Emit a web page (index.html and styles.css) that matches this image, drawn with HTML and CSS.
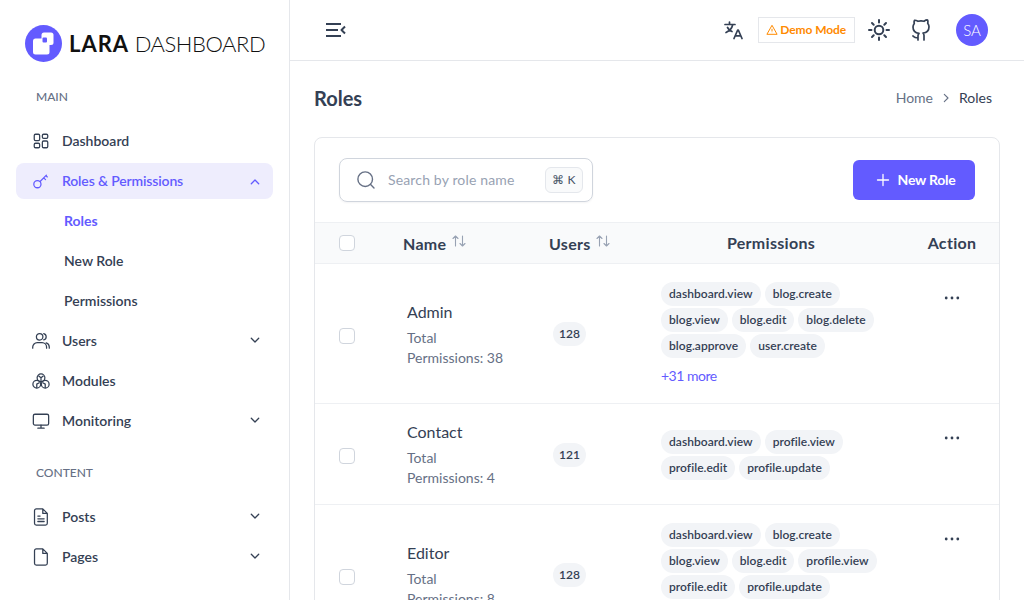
FILE: index.html
```html
<!DOCTYPE html>
<html>
<head>
  <title>Roles - Lara Dashboard</title>
  <link rel="stylesheet" href="styles.css">
</head>
<body>
  <svg class="defs" width="0" height="0">
    <symbol id="chev-down" viewBox="0 0 12 12"><path d="M2.300 3.300L6 7l3.700-3.700" fill="none" stroke="currentColor" stroke-width="1.300" stroke-linecap="round" stroke-linejoin="round"/></symbol>
    <symbol id="chev-up" viewBox="0 0 12 12"><path d="M2.300 8.700L6 5l3.700 3.700" fill="none" stroke="currentColor" stroke-width="1.300" stroke-linecap="round" stroke-linejoin="round"/></symbol>
    <symbol id="chev-right" viewBox="0 0 12 12"><path d="M4.300 2.300L8 6 4.300 9.700" fill="none" stroke="currentColor" stroke-width="1.100" stroke-linecap="round" stroke-linejoin="round"/></symbol>
    <symbol id="sort" viewBox="0 0 16 16"><path d="M4.500 13V3M2 5.500L4.500 3 7 5.500M11.500 3v10M9 10.500l2.500 2.500 2.500-2.500" fill="none" stroke="currentColor" stroke-width="1.100" stroke-linecap="round" stroke-linejoin="round"/></symbol>
    <symbol id="dots" viewBox="0 0 16 4"><circle cx="2.200" cy="2" r="1.400"/><circle cx="8" cy="2" r="1.400"/><circle cx="13.800" cy="2" r="1.400"/></symbol>
  </svg>

  <aside id="sidebar">
    <div class="logo">
      <svg class="logo-mark" width="37" height="37" viewBox="0 0 37 37">
        <circle cx="18.500" cy="18.500" r="18.500" fill="#635bff"/>
        <rect x="8" y="13.500" width="16.500" height="16" rx="2.500" fill="#fff"/>
        <rect x="16.500" y="7.500" width="12" height="12.500" rx="2.500" fill="#fff"/>
        <rect x="17.500" y="12.500" width="4.500" height="5" rx="1" fill="#635bff"/>
      </svg>
      <span class="logo-text"><b>LARA</b> DASHBOARD</span>
    </div>

    <div class="nav-label">Main</div>
    <nav class="nav">
      <a class="nav-item">
        <svg class="nav-icon" viewBox="0 0 20 20"><rect x="2.500" y="2.500" width="6" height="7" rx="1.400"/><rect x="11.500" y="2.500" width="6" height="4.500" rx="1.400"/><rect x="2.500" y="12.500" width="6" height="5" rx="1.400"/><rect x="11.500" y="10" width="6" height="7.500" rx="1.400"/></svg>
        Dashboard
      </a>
      <a class="nav-item active">
        <svg class="nav-icon" viewBox="0 0 20 20"><circle cx="6" cy="13.500" r="4"/><path d="M9 10.500l7-7M13 6.500l2 2M15.500 4l1.500 1.500"/></svg>
        Roles &amp; Permissions
        <svg class="chev"><use href="#chev-up"/></svg>
      </a>
      <a class="sub-item current">Roles</a>
      <a class="sub-item">New Role</a>
      <a class="sub-item">Permissions</a>
      <a class="nav-item">
        <svg class="nav-icon" viewBox="0 0 20 20"><circle cx="8.500" cy="5.300" r="3.600"/><path d="M.8 18v-1.200a5 5 0 0 1 5-5h5.400a5 5 0 0 1 5 5V18M13 1.800a3.600 3.600 0 0 1 0 7M15.800 12a5 5 0 0 1 3.400 4.700V18"/></svg>
        Users
        <svg class="chev"><use href="#chev-down"/></svg>
      </a>
      <a class="nav-item">
        <svg class="nav-icon" viewBox="0 0 20 20"><circle cx="10" cy="6.500" r="4.300"/><circle cx="5.300" cy="13.500" r="4.300"/><circle cx="14.700" cy="13.500" r="4.300"/><path d="M10 6.500v3M7.500 4.500l2.500 2 2.500-2M5.300 13.500l2.700-1.500M5.300 13.500v3.800M14.700 13.500L12 12M14.700 13.500v3.800"/></svg>
        Modules
      </a>
      <a class="nav-item">
        <svg class="nav-icon" viewBox="0 0 20 20"><rect x="1.500" y="2.500" width="17" height="12" rx="1.800"/><path d="M10 14.500v3M6.500 18h7"/></svg>
        Monitoring
        <svg class="chev"><use href="#chev-down"/></svg>
      </a>
    </nav>

    <div class="nav-label second">Content</div>
    <nav class="nav">
      <a class="nav-item">
        <svg class="nav-icon" viewBox="0 0 20 20"><path d="M2.800 3a2 2 0 0 1 2-2h7.200l5 5v11a2 2 0 0 1-2 2H4.800a2 2 0 0 1-2-2zM12 1v5h5M6.500 9h2.500M6.500 12h7M6.500 15h7"/></svg>
        Posts
        <svg class="chev"><use href="#chev-down"/></svg>
      </a>
      <a class="nav-item">
        <svg class="nav-icon" viewBox="0 0 20 20"><path d="M2.800 3a2 2 0 0 1 2-2h7.200l5 5v11a2 2 0 0 1-2 2H4.800a2 2 0 0 1-2-2zM12 1v5h5"/></svg>
        Pages
        <svg class="chev"><use href="#chev-down"/></svg>
      </a>
    </nav>
  </aside>

  <div id="main">
    <header class="topbar">
      <svg class="menu-btn" width="20" height="14" viewBox="0 0 20 14"><path d="M0 1h15M0 7h12M0 13h15M19 3.500L15.500 7l3.500 3.500"/></svg>
      <div class="top-actions">
        <svg class="top-icon lang" width="20" height="20" viewBox="0 0 20 20"><path d="M1 4.500h10M5.500 2v2.500M8.800 4.500C8 8 5.500 11 2 12.500M3.500 7.500c1 2 2.500 3.300 4.500 4M10 18.500l3.700-8.500h.6L18 18.500M11.300 15.800h5.400"/></svg>
        <span class="demo">
          <svg width="12" height="12" viewBox="0 0 12 12"><path d="M6 1.300L.9 10.300h10.200zM6 4.800v2.700M6 8.800v.2"/></svg>
          Demo Mode
        </span>
        <svg class="top-icon sun" width="24" height="24" viewBox="0 0 24 24"><circle cx="12" cy="12" r="4.300"/><path d="M12 2v2.500M12 19.500V22M2 12h2.500M19.500 12H22M5 5l1.700 1.700M17.300 17.300L19 19M5 19l1.700-1.700M17.300 6.700L19 5"/></svg>
        <svg class="top-icon git" width="20" height="22" viewBox="0 0 20 22"><path d="M13 21v-4c.1-1.200-.3-2.300-1-3 3-.3 6-1.500 6-6.300 0-1.300-.5-2.500-1.300-3.500.3-1.100.3-2.300-.2-3.200 0 0-1.100-.3-3.500 1.300a12 12 0 0 0-6 0C4.600 1 3.500 1.300 3.500 1.300c-.5.900-.5 2.100-.2 3.200C2.500 5.500 2 6.700 2 8c0 4.800 3 6 6 6.300-.7.700-1.100 1.800-1 3V21M7 18.500c-3 1-4-1-5-1.500"/></svg>
        <span class="avatar">SA</span>
      </div>
    </header>

    <div class="content">
      <div class="page-head">
        <h1>Roles</h1>
        <div class="crumbs">
          <span class="crumb-home">Home</span>
          <svg class="crumb-sep"><use href="#chev-right"/></svg>
          <span>Roles</span>
        </div>
      </div>

      <div class="card">
        <div class="toolbar">
          <div class="search">
            <svg class="search-icon" width="20" height="20" viewBox="0 0 20 20"><circle cx="9.200" cy="9.200" r="7.300"/><path d="M14.600 14.600L18 18"/></svg>
            <span class="search-text">Search by role name</span>
            <span class="kbd">⌘ K</span>
          </div>
          <button class="new-btn">
            <svg width="14" height="14" viewBox="0 0 14 14"><path d="M7 1.500v11M1.500 7h11"/></svg>
            New Role
          </button>
        </div>

        <table class="roles">
          <colgroup>
            <col class="c-check"><col class="c-name"><col class="c-users"><col class="c-perm"><col class="c-action">
          </colgroup>
          <thead>
            <tr>
              <th class="check-cell"><span class="check"></span></th>
              <th>Name <svg class="sort"><use href="#sort"/></svg></th>
              <th>Users <svg class="sort"><use href="#sort"/></svg></th>
              <th class="center">Permissions</th>
              <th class="center">Action</th>
            </tr>
          </thead>
          <tbody>
            <tr>
              <td class="check-cell"><span class="check"></span></td>
              <td class="name-cell"><div class="role-name">Admin</div><div class="role-sub">Total Permissions: 38</div></td>
              <td class="users-cell"><span class="chip">128</span></td>
              <td class="perm-cell">
                <div class="chips">
                  <span class="chip">dashboard.view</span><span class="chip">blog.create</span><span class="chip">blog.view</span><span class="chip">blog.edit</span><span class="chip">blog.delete</span><span class="chip">blog.approve</span><span class="chip">user.create</span>
                </div>
                <div class="more">+31 more</div>
              </td>
              <td class="action-cell"><svg class="dots"><use href="#dots"/></svg></td>
            </tr>
            <tr>
              <td class="check-cell"><span class="check"></span></td>
              <td class="name-cell"><div class="role-name">Contact</div><div class="role-sub">Total Permissions: 4</div></td>
              <td class="users-cell"><span class="chip">121</span></td>
              <td class="perm-cell">
                <div class="chips">
                  <span class="chip">dashboard.view</span><span class="chip">profile.view</span><span class="chip">profile.edit</span><span class="chip">profile.update</span>
                </div>
              </td>
              <td class="action-cell"><svg class="dots"><use href="#dots"/></svg></td>
            </tr>
            <tr>
              <td class="check-cell"><span class="check"></span></td>
              <td class="name-cell"><div class="role-name">Editor</div><div class="role-sub">Total Permissions: 8</div></td>
              <td class="users-cell"><span class="chip">128</span></td>
              <td class="perm-cell">
                <div class="chips">
                  <span class="chip">dashboard.view</span><span class="chip">blog.create</span><span class="chip">blog.view</span><span class="chip">blog.edit</span><span class="chip">profile.view</span><span class="chip">profile.edit</span><span class="chip">profile.update</span>
                </div>
                <div class="more">+1 more</div>
              </td>
              <td class="action-cell"><svg class="dots"><use href="#dots"/></svg></td>
            </tr>
          </tbody>
        </table>
      </div>
    </div>
  </div>
</body>
</html>
```

FILE: styles.css
```css
* {
  box-sizing: border-box;
}

body {
  margin: 0;
  height: 100vh;
  overflow: hidden;
  display: flex;
  background-color: #fff;
  color: #344054;
  font-family: Lato, "Open Sans", sans-serif;
  font-size: 14px;
  line-height: 20px;
}

.defs {
  position: absolute;
}

/* sidebar */
#sidebar {
  flex: 0 0 290px;
  height: 100%;
  padding: 0 16px;
  border-right: 1px solid #e5e7eb;
  overflow: hidden;
}

.logo {
  height: 87px;
  display: flex;
  align-items: center;
  padding: 0 0 0 9px;
  gap: 7px;
}

.logo-mark {
  flex: none;
}

.logo-text {
  font-size: 22px;
  font-weight: 300;
  color: #111;
  white-space: nowrap;
  letter-spacing: -0.45px;
}

.logo-text b {
  font-weight: 700;
  letter-spacing: 1px;
}

.nav-label {
  padding-left: 20px;
  font-size: 12px;
  font-weight: 500;
  color: #667085;
  text-transform: uppercase;
  margin-bottom: 16px;
}

.nav-label.second {
  margin-top: 24px;
}

.nav {
  display: flex;
  flex-direction: column;
  gap: 4px;
}

.nav-item,
.sub-item {
  height: 36px;
  display: flex;
  align-items: center;
  font-weight: 600;
  border-radius: 8px;
}

.nav-item {
  padding: 0 12px 0 16px;
}

.nav-item.active {
  background-color: #eeedfd;
  color: #635bff;
  letter-spacing: -0.15px;
}

.sub-item {
  padding-left: 48px;
}

.sub-item.current {
  color: #635bff;
  font-weight: 700;
}

.nav-icon {
  width: 18px;
  height: 18px;
  margin-right: 12px;
  fill: none;
  stroke: currentColor;
  stroke-width: 1.400;
  stroke-linecap: round;
  stroke-linejoin: round;
  flex: none;
}

.chev {
  width: 12px;
  height: 12px;
  margin-left: auto;
}

/* top bar */
#main {
  flex: 1;
  min-width: 0;
}

.topbar {
  height: 61px;
  display: flex;
  align-items: center;
  justify-content: space-between;
  padding: 0 36px;
  border-bottom: 1px solid #e5e7eb;
}

.menu-btn,
.top-icon,
.search-icon {
  fill: none;
  stroke: #344054;
  stroke-width: 1.700;
  stroke-linecap: round;
  stroke-linejoin: round;
}

.menu-btn {
  stroke-width: 2;
  stroke-linecap: butt;
}

.top-actions {
  display: flex;
  align-items: center;
}

.lang {
  margin-right: 14px;
}

.demo {
  height: 26px;
  padding: 0 8px 0 7px;
  display: flex;
  align-items: center;
  gap: 2px;
  border: 1px solid #e5e7eb;
  font-size: 12px;
  font-weight: 700;
  letter-spacing: -0.1px;
  color: #ff8a00;
}

.demo svg {
  fill: none;
  stroke: #ff8a00;
  stroke-width: 1;
  stroke-linejoin: round;
}

.sun {
  margin: 0 20px 0 12px;
  stroke-width: 2;
}

.git {
  margin-right: 25px;
}

.avatar {
  width: 32px;
  height: 32px;
  border-radius: 50%;
  background-color: #635bff;
  color: #fff;
  font-size: 15px;
  font-weight: 300;
  display: flex;
  align-items: center;
  justify-content: center;
}

/* page */
.content {
  padding: 24px 24px 0;
}

.page-head {
  display: flex;
  align-items: center;
  justify-content: space-between;
  height: 26px;
  margin-bottom: 26px;
}

h1 {
  margin: 0;
  font-size: 20px;
  font-weight: 700;
}

.crumbs {
  display: flex;
  align-items: center;
  gap: 7px;
  padding-right: 8px;
}

.crumb-home {
  color: #667085;
}

.crumb-sep {
  width: 12px;
  height: 12px;
  color: #667085;
}

.card {
  border: 1px solid #e5e7eb;
  border-radius: 8px 8px 0 0;
}

.toolbar {
  height: 84px;
  display: flex;
  align-items: center;
  justify-content: space-between;
  padding: 0 24px;
}

.search {
  width: 254px;
  height: 44px;
  display: flex;
  align-items: center;
  padding: 0 9px 0 16px;
  border: 1px solid #d0d5dd;
  border-radius: 8px;
  box-shadow: 0 1px 2px rgba(16, 24, 40, 0.05);
}

.search-icon {
  flex: none;
  stroke: #667085;
  stroke-width: 1.400;
}

.search-text {
  margin-left: 12px;
  color: #98a2b3;
  letter-spacing: 0.15px;
}

.kbd {
  margin-left: auto;
  width: 38px;
  height: 26px;
  display: flex;
  align-items: center;
  justify-content: center;
  background-color: #f9fafb;
  border: 1px solid #e4e7ec;
  border-radius: 6px;
  font-size: 12px;
  color: #475467;
}

.new-btn {
  width: 122px;
  height: 40px;
  display: flex;
  align-items: center;
  justify-content: center;
  gap: 8px;
  padding: 0 0 0 3px;
  border: none;
  border-radius: 6px;
  background-color: #635bff;
  color: #fff;
  font: inherit;
  font-weight: 700;
  letter-spacing: -0.25px;
  cursor: pointer;
}

.new-btn svg {
  fill: none;
  stroke: #fff;
  stroke-width: 1.300;
  stroke-linecap: round;
}

/* table */
.roles {
  width: 684px;
  table-layout: fixed;
  border-collapse: collapse;
}

.c-check { width: 68px; }
.c-name { width: 146px; }
.c-users { width: 108px; }
.c-perm { width: 268px; }
.c-action { width: 94px; }

.roles th {
  height: 41px;
  padding: 0 0 0 20px;
  background-color: #f9fafb;
  border-top: 1px solid #eef0f3;
  border-bottom: 1px solid #eef0f3;
  font-size: 16px;
  font-weight: 700;
  letter-spacing: 0.3px;
  text-align: left;
  white-space: nowrap;
}

.roles th.center {
  padding: 0;
  text-align: center;
}

.roles th.check-cell {
  padding: 0 0 0 24px;
}

.roles td.check-cell {
  padding: 4px 0 0 24px;
}

.roles td {
  padding: 18px 0 17px 24px;
  border-bottom: 1px solid #eef0f3;
  vertical-align: middle;
}

.check {
  display: block;
  width: 16px;
  height: 16px;
  border: 1px solid #d0d5dd;
  border-radius: 4px;
  background-color: #fff;
}

.sort {
  width: 16px;
  height: 16px;
  color: #98a2b3;
  vertical-align: 1px;
}

.roles td.name-cell {
  padding: 18px 0 16px 24px;
}

.role-name {
  font-size: 16px;
  margin-bottom: 6px;
}

.role-sub {
  max-width: 100px;
  color: #667085;
}

.chips {
  display: flex;
  flex-wrap: wrap;
  gap: 2px 4px;
}

.chip {
  display: inline-block;
  height: 24px;
  padding: 0 8px;
  border-radius: 12px;
  background-color: #f2f4f7;
  font-size: 12px;
  font-weight: 600;
  letter-spacing: 0.05px;
  line-height: 24px;
}

.users-cell .chip {
  padding: 0 6px;
}

.more {
  margin-top: 8px;
  color: #635bff;
  letter-spacing: -0.5px;
}

.roles td.action-cell {
  padding: 21px 0 0;
  vertical-align: top;
  text-align: center;
}

.dots {
  display: inline-block;
  width: 16px;
  height: 4px;
  fill: #344054;
}
```
